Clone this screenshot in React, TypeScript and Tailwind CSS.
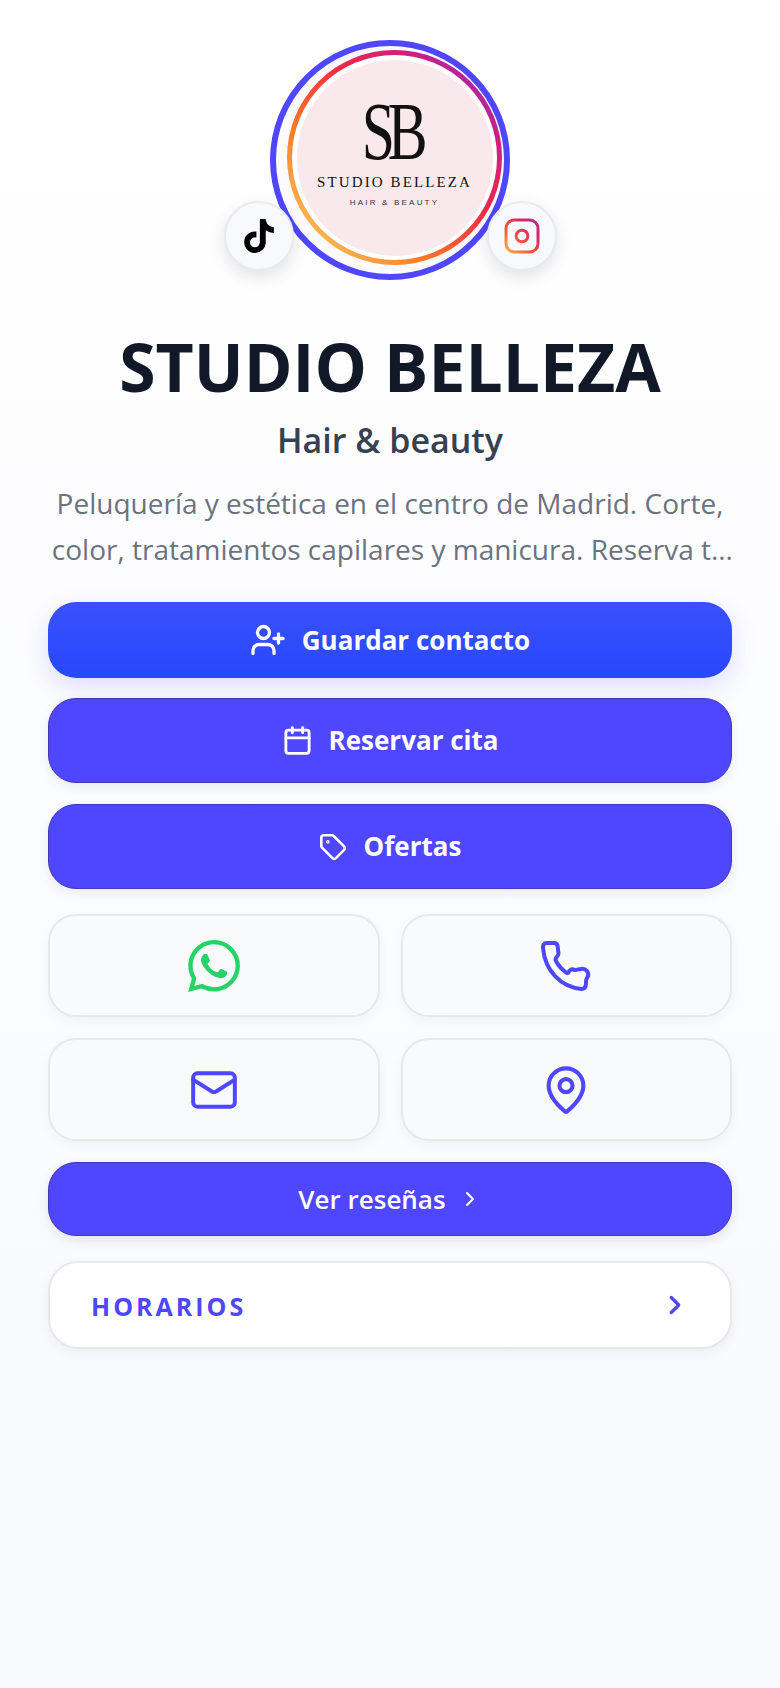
import { Calendar, ChevronRight, Mail, MapPin, Tag, UserPlus } from 'lucide-react';
import { FaTiktok } from 'react-icons/fa';
import { SiWhatsapp } from 'react-icons/si';

const sans = 'font-["Open_Sans",sans-serif]';

function PrimaryButton({ icon, label, className }: { icon: React.ReactNode; label: string; className: string }) {
  return (
    <button className={`flex w-full items-center justify-center rounded-[28px] border border-[#3f37c0] bg-[#4f46ff] font-bold text-white shadow-[0_4px_12px_rgba(17,24,39,0.08)] ${className}`}>
      {icon}
      <span>{label}</span>
    </button>
  );
}

function Tile({ children }: { children: React.ReactNode }) {
  return (
    <div className="flex h-[103px] items-center justify-center rounded-[28px] border-2 border-[#e7e8ec] bg-[#f9fafc] shadow-[0_4px_12px_rgba(17,24,39,0.04)]">
      {children}
    </div>
  );
}

function Avatar() {
  return (
    <div className="relative h-[240px] w-[240px] rounded-full border-[6px] border-[#4f46ff] bg-[#fbfbfe]">
      <div className="absolute left-[11px] top-[4px] flex h-[215px] w-[215px] items-center justify-center rounded-full bg-[linear-gradient(45deg,#fdc65f_8%,#fb7a24_33%,#ee2a45_58%,#cf1f80_78%,#8a2fc4_95%)]">
        <div className="flex h-[205px] w-[205px] items-center justify-center rounded-full bg-white">
          <div className="flex h-[196px] w-[196px] flex-col items-center rounded-full bg-[#f9e9ec] pt-[38px] text-[#111]">
            <div className="origin-center scale-x-[0.72] font-['Liberation_Serif',serif] text-[83px] leading-[66px] tracking-[-10px] pr-[10px]">SB</div>
            <div className="mt-[9px] font-['Liberation_Serif',serif] text-[15px] leading-[18px] tracking-[2.1px]">STUDIO BELLEZA</div>
            <div className="mt-[7px] font-['Liberation_Sans',sans-serif] text-[8px] leading-[10px] tracking-[2.2px] text-[#333]">HAIR &amp; BEAUTY</div>
          </div>
        </div>
      </div>
    </div>
  );
}

function Badge({ className, children }: { className: string; children: React.ReactNode }) {
  return (
    <div className={`absolute top-[161px] flex h-[70px] w-[70px] items-center justify-center rounded-full border-2 border-[#e9eaee] bg-[#f8f9fc] shadow-[0_6px_16px_rgba(17,24,39,0.12)] ${className}`}>
      {children}
    </div>
  );
}

export default function App() {
  return (
    <div className={`min-h-[1688px] w-full bg-[linear-gradient(180deg,#ffffff_0%,#f8f9fd_100%)] px-[48px] pt-[40px] ${sans}`}>
      <div className="relative flex justify-center">
        <Avatar />
        <Badge className="left-[176px]">
          <FaTiktok size={34} color="#000" />
        </Badge>
        <Badge className="left-[439px]">
          <svg width="40" height="40" viewBox="0 0 24 24" fill="none" strokeWidth="1.8" strokeLinecap="round" stroke="url(#ig)">
            <defs>
              <linearGradient id="ig" x1="2" y1="22" x2="22" y2="2" gradientUnits="userSpaceOnUse">
                <stop offset="0" stopColor="#fdb54a" />
                <stop offset="0.4" stopColor="#f2543a" />
                <stop offset="0.7" stopColor="#d92a62" />
                <stop offset="1" stopColor="#b32a9a" />
              </linearGradient>
            </defs>
            <rect x="2.4" y="2.4" width="19.2" height="19.2" rx="5" />
            <circle cx="12" cy="12" r="3.5" />
          </svg>
        </Badge>
      </div>

      <h1 className="mt-[45px] text-center text-[66px] font-bold leading-[82px] text-[#111827]">STUDIO BELLEZA</h1>
      <p className="mt-[9px] text-center text-[34px] font-semibold leading-[48px] text-[#374151]">Hair &amp; beauty</p>
      <p className="mt-[16px] line-clamp-2 text-center text-[28px] leading-[46px] text-[#6b7280]">
        Peluquería y estética en el centro de Madrid. Corte, color, tratamientos capilares y manicura. Reserva tu cita online hoy mismo.
      </p>

      <div className="mt-[30px] flex flex-col">
        <button className="flex h-[76px] w-full items-center justify-center gap-[16px] rounded-[28px] bg-[linear-gradient(180deg,#3a50ff,#2748fb)] text-[26px] font-bold text-white shadow-[0_8px_24px_rgba(79,70,255,0.18)]">
          <UserPlus size={36} strokeWidth={2.2} />
          <span>Guardar contacto</span>
        </button>
        <PrimaryButton className="mt-[20px] h-[85px] gap-[16px] text-[26px]" icon={<Calendar size={31} strokeWidth={2.2} />} label="Reservar cita" />
        <PrimaryButton className="mt-[21px] h-[85px] gap-[17px] text-[26px]" icon={<Tag size={28} strokeWidth={2.2} />} label="Ofertas" />
      </div>

      <div className="mt-[25px] grid grid-cols-2 gap-[21px]">
        <Tile>
          <SiWhatsapp size={52} color="#25d366" />
        </Tile>
        <Tile>
          <svg width="50" height="50" viewBox="0 0 50 50" fill="none" stroke="#4f46ff" strokeWidth="4" strokeLinejoin="round">
            <path d="M5.5 2H13C15.5 2 16.5 3.5 16.7 5.5C17 8 17 10 17.5 12C17.7 14 16.5 15 15.3 16.5C14.3 17.7 14.3 18.5 15 20C17 24 21 28.5 25 31.5C26 32.3 27 32 27.7 31C29 29 30 27.8 32 28.5C34 29.2 36 29 38.5 28.2C41 27.5 44 27.5 46 30C47.8 32.5 47.5 35 46 37C44.8 38.5 45 40 45 42C45 45 44.5 48 40.5 48C20 46 4 30 2 7C1.8 4 3 2 5.5 2Z" />
          </svg>
        </Tile>
        <Tile>
          <Mail size={50} color="#4f46ff" strokeWidth={1.9} />
        </Tile>
        <Tile>
          <MapPin size={52} color="#4f46ff" strokeWidth={1.9} />
        </Tile>
      </div>

      <button className="mt-[21px] flex h-[74px] w-full items-center justify-center gap-[12px] rounded-[28px] border border-[#3f37c0] bg-[#4f46ff] text-[26px] font-semibold text-white shadow-[0_4px_12px_rgba(17,24,39,0.1)]">
        <span>Ver reseñas</span>
        <ChevronRight size={24} />
      </button>

      <div className="mt-[25px] flex h-[88px] items-center justify-between rounded-[30px] border-2 border-[#e7e8ec] bg-white pl-[41px] pr-[40px] shadow-[0_4px_12px_rgba(17,24,39,0.05)]">
        <span className="mt-[3px] text-[25px] font-bold tracking-[3px] text-[#4f46ff]">HORARIOS</span>
        <ChevronRight size={30} color="#4f46ff" strokeWidth={2.6} />
      </div>
    </div>
  );
}
